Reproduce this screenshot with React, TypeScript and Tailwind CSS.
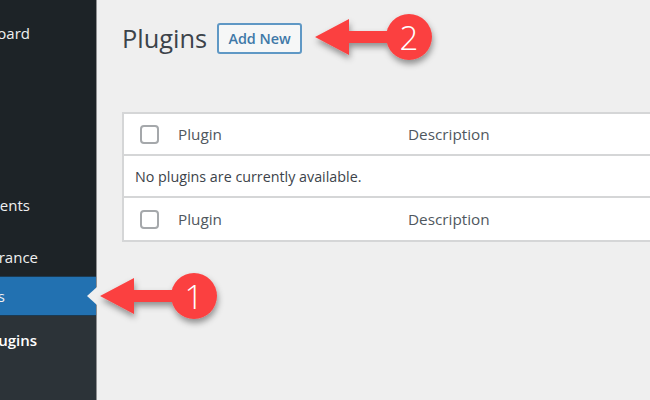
const font = "font-['Open_Sans','Noto_Sans',sans-serif]";

function SideItem({ label, className = "" }: { label: string; className?: string }) {
  return <div className={"flex justify-end whitespace-nowrap text-[15px] leading-[20px] text-[#f0f0f1] " + className}>{label}</div>;
}

function Row({ last }: { last?: boolean }) {
  return (
    <div className={"flex h-[42px] items-center bg-white pl-[16px] text-[15.3px] text-[#50575e] " + (last ? "" : "border-b-2 border-[#d5d6d7]")}>
      <span className="h-[19px] w-[19px] shrink-0 rounded-[4px] border-2 border-[#a5a8ab] bg-white" />
      <span className="ml-[19px] w-[230px] pt-px">Plugin</span>
      <span className="pt-px">Description</span>
    </div>
  );
}

function Arrow({ className, n }: { className: string; n: string }) {
  return (
    <div className={"absolute h-[60px] w-[140px] " + className}>
      <svg width="140" height="70" viewBox="0 0 140 70" className="absolute left-0 top-0 overflow-visible">
        <defs>
          <filter id={"s" + n} x="-20%" y="-30%" width="140%" height="170%">
            <feDropShadow dx="1" dy="4" stdDeviation="3" floodColor="#000" floodOpacity="0.4" />
          </filter>
        </defs>
        <g filter={"url(#s" + n + ")"} fill="#fb4141">
          <path d="M1 26 L35 8 V20 H80 V32 H35 V44 Z" />
          <circle cx="95" cy="26" r="23" />
        </g>
      </svg>
      <span className="absolute left-[72px] top-[3px] flex h-[46px] w-[46px] items-center justify-center text-[33px] font-light leading-none text-white">{n}</span>
    </div>
  );
}

export default function App() {
  return (
    <div className={"relative flex h-[400px] w-[650px] overflow-hidden bg-[#efefef] " + font}>
      <aside className="flex w-[97px] shrink-0 flex-col overflow-hidden border-r border-[#8f9092] bg-[#1d2327]">
        <div className="pr-[66px] pt-[23px]"><SideItem label="Dashboard" /></div>
        <div className="pr-[66px] pt-[152px]"><SideItem label="Comments" /></div>
        <div className="h-[61px] pr-[58px] pt-[32px]"><SideItem label="Appearance" /></div>
        <div className="flex h-[40px] items-center justify-end border-y border-[#1b3a52] bg-[#2271b1] pr-[91px]">
          <SideItem label="Plugins" />
        </div>
        <div className="flex-1 bg-[#2c3338] pr-[59px] pt-[14px]">
          <SideItem label="Installed Plugins" className="font-semibold text-white" />
        </div>
      </aside>
      <main className="min-w-0 flex-1 pl-[25px] pt-[23px]">
        <div className="flex items-center">
          <h1 className="text-[25.4px] leading-[31px] text-[#3c434a]">Plugins</h1>
          <button className="ml-[10px] flex h-[31px] w-[85px] items-center justify-center rounded-[3px] border-2 border-[#5f98c5] bg-[#f6f7f7] pt-px text-[14.4px] font-semibold text-[#3f79a8]">Add New</button>
        </div>
        <div className="mt-[58px] w-[600px] border-2 border-[#d5d6d7] bg-white">
          <Row />
          <div className="flex h-[42px] items-center border-b-2 border-[#d5d6d7] pl-[11px] pt-px text-[14.3px] text-[#3c434a]">No plugins are currently available.</div>
          <Row last />
        </div>
      </main>
      <div className="absolute left-[87px] top-[287px] h-0 w-0 border-y-[9px] border-r-[10px] border-y-transparent border-r-[#efefef]" />
      <Arrow className="left-[99px] top-[270px]" n="1" />
      <Arrow className="left-[314px] top-[11px]" n="2" />
    </div>
  );
}
